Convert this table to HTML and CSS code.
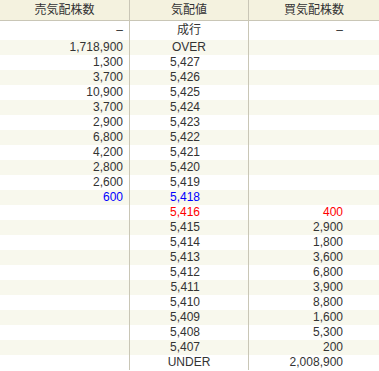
FILE: index.html
```html
<!DOCTYPE html>
<html lang="ja">
<head>
<meta charset="utf-8">
<title>気配</title>
<link rel="stylesheet" href="styles.css">
</head>
<body>
<table class="board">
  <thead>
    <tr>
      <th class="c-sell">売気配株数</th>
      <th class="c-price">気配値</th>
      <th class="c-buy">買気配株数</th>
    </tr>
  </thead>
  <tbody>
    <tr class="first"><td class="sell">–</td><td class="price word">成行</td><td class="buy">–</td></tr>
    <tr><td class="sell">1,718,900</td><td class="price word">OVER</td><td class="buy"></td></tr>
    <tr><td class="sell">1,300</td><td class="price">5,427</td><td class="buy"></td></tr>
    <tr><td class="sell">3,700</td><td class="price">5,426</td><td class="buy"></td></tr>
    <tr><td class="sell">10,900</td><td class="price">5,425</td><td class="buy"></td></tr>
    <tr><td class="sell">3,700</td><td class="price">5,424</td><td class="buy"></td></tr>
    <tr><td class="sell">2,900</td><td class="price">5,423</td><td class="buy"></td></tr>
    <tr><td class="sell">6,800</td><td class="price">5,422</td><td class="buy"></td></tr>
    <tr><td class="sell">4,200</td><td class="price">5,421</td><td class="buy"></td></tr>
    <tr><td class="sell">2,800</td><td class="price">5,420</td><td class="buy"></td></tr>
    <tr><td class="sell">2,600</td><td class="price">5,419</td><td class="buy"></td></tr>
    <tr><td class="sell blue">600</td><td class="price blue">5,418</td><td class="buy"></td></tr>
    <tr><td class="sell"></td><td class="price red">5,416</td><td class="buy red">400</td></tr>
    <tr><td class="sell"></td><td class="price">5,415</td><td class="buy">2,900</td></tr>
    <tr><td class="sell"></td><td class="price">5,414</td><td class="buy">1,800</td></tr>
    <tr><td class="sell"></td><td class="price">5,413</td><td class="buy">3,600</td></tr>
    <tr><td class="sell"></td><td class="price">5,412</td><td class="buy">6,800</td></tr>
    <tr><td class="sell"></td><td class="price">5,411</td><td class="buy">3,900</td></tr>
    <tr><td class="sell"></td><td class="price">5,410</td><td class="buy">8,800</td></tr>
    <tr><td class="sell"></td><td class="price">5,409</td><td class="buy">1,600</td></tr>
    <tr><td class="sell"></td><td class="price">5,408</td><td class="buy">5,300</td></tr>
    <tr><td class="sell"></td><td class="price">5,407</td><td class="buy">200</td></tr>
    <tr><td class="sell"></td><td class="price word">UNDER</td><td class="buy">2,008,900</td></tr>
  </tbody>
</table>
</body>
</html>
```
FILE: styles.css
```css
html, body {
  margin: 0;
  padding: 0;
  background: #ffffff;
}

.board {
  width: 379px;
  border-collapse: collapse;
  table-layout: fixed;
  font-family: "Liberation Sans", Arial, "Noto Sans CJK JP", sans-serif;
  font-size: 12px;
  color: #333333;
}

.board th {
  height: 20px;
  padding: 0;
  background: #f4f2df;
  font-weight: normal;
  text-align: center;
  color: #333333;
  line-height: 20px;
  border-bottom: 1px solid #c9c6b6;
}

.c-sell { width: 129px; }
.c-price { width: 118px; }
.c-buy { width: auto; }

.board th + th,
.board td + td {
  border-left: 1px solid #c9c6b6;
}

.board td {
  height: 15px;
  line-height: 15px;
  padding: 0;
  white-space: nowrap;
}

.board tbody tr:nth-child(even) td {
  background: #f8f8ed;
}

.board tbody tr.first td {
  height: 19px;
  line-height: 19px;
}

.sell {
  text-align: right;
  padding-right: 6px !important;
}

.price {
  text-align: center;
  padding-right: 8px !important;
}

.price.word {
  padding-right: 0 !important;
}

.buy {
  text-align: right;
  padding-right: 36px !important;
}

.blue { color: #0000ff; }
.red { color: #ff0000; }
```
